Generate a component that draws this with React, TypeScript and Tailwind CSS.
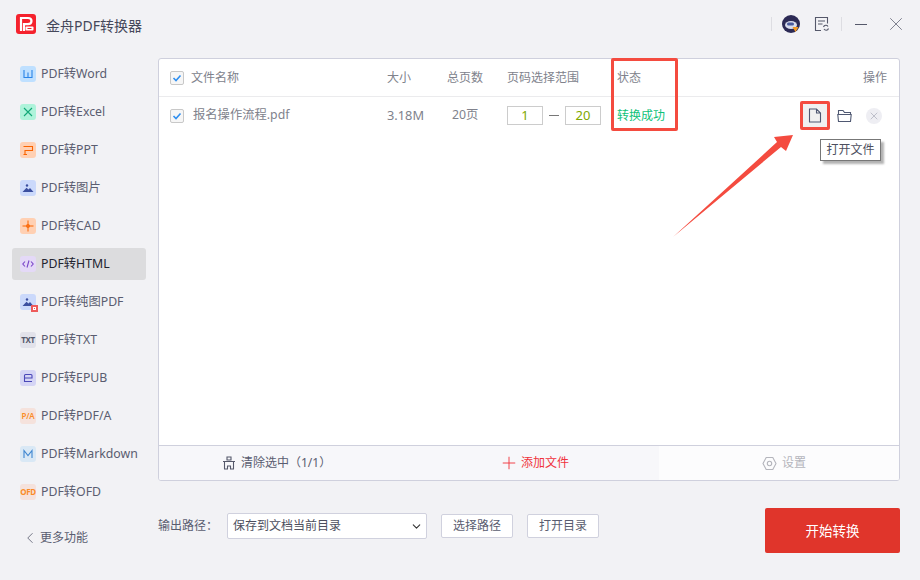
import { ChevronDown, ChevronLeft, Plus, X } from 'lucide-react';
import type { ReactNode } from 'react';

const font = "font-['Noto_Sans','Noto_Sans_CJK_SC',sans-serif]";

function Stroke({ color, d, w = 1.1 }: { color: string; d: string; w?: number }) {
  return (
    <svg width="16" height="16" viewBox="0 0 16 16" fill="none">
      <path d={d} stroke={color} strokeWidth={w} />
    </svg>
  );
}

function Mountain({ color }: { color: string }) {
  return (
    <svg width="16" height="16" viewBox="0 0 16 16">
      <circle cx="7" cy="5.5" r="1.2" fill={color} />
      <path d="M2.5 12 L6.5 7.8 L8.5 9.6 L10 8 L13.5 12 Z" fill={color} />
    </svg>
  );
}

const tools: { label: string; bg: string; icon: ReactNode; active?: boolean }[] = [
  { label: 'PDF转Word', bg: 'bg-[#bfe0ff]', icon: <Stroke color="#2b85e8" d="M4 4 V11.5 H12 V4 M8 6.5 V11.5" /> },
  { label: 'PDF转Excel', bg: 'bg-[#aef3da]', icon: <Stroke color="#12a877" d="M4 4 L12 12 M12 4 L4 12" /> },
  { label: 'PDF转PPT', bg: 'bg-[#ffd0b3]', icon: <Stroke color="#fa6400" d="M3.5 4.5 H12.5 V8.5 H5 V12.5 M3.5 12.5 H7" /> },
  { label: 'PDF转图片', bg: 'bg-[#cbd9fb]', icon: <Mountain color="#3b4fa0" /> },
  { label: 'PDF转CAD', bg: 'bg-[#ffd0b3]', icon: <Stroke color="#fa6400" d="M8 2.5 V13.5 M2.5 8 H13.5 M6.8 6.8 H9.2 V9.2 H6.8 Z" w={1} /> },
  { label: 'PDF转HTML', bg: 'bg-[#e4d9f7]', active: true, icon: <Stroke color="#7a45c9" d="M5 5.5 L2.8 8 L5 10.5 M11 5.5 L13.2 8 L11 10.5 M9 4.5 L7 11.5" /> },
  {
    label: 'PDF转纯图PDF',
    bg: 'bg-[#cbd9fb]',
    icon: (
      <>
        <Mountain color="#3b4fa0" />
        <span className="absolute -right-[2px] -bottom-[2px] flex h-[7px] w-[7px] items-center justify-center bg-[#ee5b5b]">
          <span className="h-[3px] w-[3px] border border-white" />
        </span>
      </>
    ),
  },
  { label: 'PDF转TXT', bg: 'bg-[#e2e2ea]', icon: <span className="text-[8px] leading-none font-bold tracking-[-0.3px] text-[#55586a]">TXT</span> },
  { label: 'PDF转EPUB', bg: 'bg-[#d5d5f5]', icon: <Stroke color="#4a48b8" d="M4.5 8 H12 V5.5 Q12 4.5 11 4.5 H5.5 Q4.5 4.5 4.5 5.5 V11.5 H12" /> },
  { label: 'PDF转PDF/A', bg: 'bg-[#f5e2dc]', icon: <span className="text-[8px] leading-none font-semibold tracking-[-0.2px] text-[#fa8c28]">P/A</span> },
  { label: 'PDF转Markdown', bg: 'bg-[#d9e8f5]', icon: <Stroke color="#3f86d0" d="M4 12 V4.5 L8 9.5 L12 4.5 V12" /> },
  { label: 'PDF转OFD', bg: 'bg-[#f5e2dc]', icon: <span className="text-[8px] leading-none font-bold tracking-[-0.4px] text-[#fa8c28]">OFD</span> },
];

function Check() {
  return (
    <span className="flex h-[14px] w-[14px] shrink-0 items-center justify-center rounded-[2px] border border-[#c8c8c8] bg-[#f6f6f6]">
      <svg width="10" height="10" viewBox="0 0 10 10" fill="none">
        <path d="M1.5 5 L4 7.5 L8.5 2.5" stroke="#2f8ff0" strokeWidth="1.6" />
      </svg>
    </span>
  );
}

function PageBox({ value }: { value: string }) {
  return (
    <span className="flex h-[19px] w-[36px] items-center justify-center border border-[#cccccc] text-[13px] text-[#7fa800]">
      {value}
    </span>
  );
}

export default function App() {
  return (
    <div className={`${font} relative flex h-[580px] w-[920px] flex-col overflow-hidden bg-[#f2f2f5] text-[#5a5d70]`}>
      {/* title bar */}
      <header className="flex h-[58px] shrink-0 items-start">
        <div className="mt-[12px] ml-[16px] flex items-center">
          <svg width="20" height="20" viewBox="0 0 20 20">
            <rect width="20" height="20" rx="3" fill="#f5222d" />
            <path d="M5 17 V4 H12 Q15.5 4 15.5 7 Q15.5 10.2 12 10.2 H8 V17" fill="none" stroke="#fff" strokeWidth="2.2" />
            <rect x="9.5" y="12.5" width="8" height="4" rx="1" fill="#fff" />
            <rect x="11.5" y="14" width="4" height="1" fill="#f5222d" />
          </svg>
          <span className="mt-[3px] ml-[10px] text-[14px] text-[#45485a]">金舟PDF转换器</span>
        </div>
        <div className="mt-[13px] ml-auto flex items-center">
          <span className="h-[14px] w-px bg-[#dddde2]" />
          <svg className="ml-[10px]" width="18" height="18" viewBox="0 0 18 18">
            <circle cx="9" cy="9" r="9" fill="#2c2a55" />
            <ellipse cx="9" cy="10" rx="6" ry="4" fill="#d8dcec" />
            <rect x="5" y="7.5" width="7" height="3" rx="1.5" fill="#4a5a9c" />
            <path d="M10.5 12 H16.5 L13.5 17 Z" fill="#f59a23" />
          </svg>
          <svg className="ml-[14px]" width="16" height="16" viewBox="0 0 16 16" fill="none" stroke="#55586a" strokeWidth="1.1">
            <path d="M7 14.5 H1.5 V1.5 H13.5 V7.5 M4 5 H11 M4 8 H8.5" />
            <path d="M9.5 11 A2.5 2.5 0 0 1 14 10.5 M14.5 12.5 A2.5 2.5 0 0 1 10 13" />
          </svg>
          <span className="ml-[11px] h-[14px] w-px bg-[#dddde2]" />
          <span className="ml-[13px] h-px w-[12px] bg-[#55586a]" />
          <X className="mr-[13px] ml-[18px] h-[22px] w-[22px] text-[#55586a]" strokeWidth={0.8} />
        </div>
      </header>

      <div className="flex h-[423px] shrink-0">
        {/* tool list */}
        <aside className="flex w-[158px] shrink-0 flex-col">
          <nav className="ml-[12px] flex w-[134px] flex-col gap-[6px]">
            {tools.map((tool) => (
              <div
                key={tool.label}
                className={`flex h-[32px] items-center rounded-[3px] pl-[8px] text-[12.3px] ${
                  tool.active ? 'bg-[#dcdcde] text-[#22232e]' : ''
                }`}
              >
                <span className={`relative mr-[5px] flex h-[16px] w-[16px] shrink-0 items-center justify-center rounded-[3px] ${tool.bg}`}>
                  {tool.icon}
                </span>
                {tool.label}
              </div>
            ))}
          </nav>
        </aside>

        {/* file table */}
        <main className="flex w-[742px] flex-col overflow-hidden rounded-[3px] border border-[#cfd0dd] bg-white">
          <div className="flex h-[38px] shrink-0 items-center border-b border-[#ebebed] pl-[11px] text-[12px] text-[#80828c]">
            <Check />
            <span className="ml-[7px] w-[196px]">文件名称</span>
            <span className="w-[60px]">大小</span>
            <span className="w-[60px]">总页数</span>
            <span className="w-[110px]">页码选择范围</span>
            <span>状态</span>
            <span className="mr-[12px] ml-auto">操作</span>
          </div>
          <div className="flex h-[37px] shrink-0 items-center pl-[11px] text-[12.5px] text-[#80828c]">
            <Check />
            <span className="ml-[9px] w-[194px] text-[12.3px]">报名操作流程.pdf</span>
            <span className="w-[65px] text-[12.8px]">3.18M</span>
            <span className="w-[55px] text-[12.3px]">20页</span>
            <span className="flex w-[110px] items-center">
              <PageBox value="1" />
              <span className="mx-[6px] h-px w-[10px] bg-[#777]" />
              <PageBox value="20" />
            </span>
            <span className="w-[48px] text-[12px] text-[#0fc27a]">转换成功</span>
            <span className="ml-[137px] flex h-[26px] w-[26px] items-center justify-center bg-[#f0f0f0]">
              <svg width="14" height="15" viewBox="0 0 14 15" fill="none" stroke="#4f5872" strokeWidth="1.1">
                <path d="M1.5 1 H8.5 L12.5 5 V14 H1.5 Z M8.5 1 V5 H12.5" />
              </svg>
            </span>
            <svg className="ml-[9px]" width="15" height="14" viewBox="0 0 15 14" fill="none" stroke="#4f5872" strokeWidth="1.1">
              <path d="M1.5 5 V1.5 H6 L7.5 3.5 H13.5 V5 M0.8 5.5 H14.2 L13.5 12.5 H1.5 Z" />
            </svg>
            <span className="ml-[14px] flex h-[16px] w-[16px] items-center justify-center rounded-full bg-[#eeeef3]">
              <X className="h-[12px] w-[12px] text-[#a9abb8]" strokeWidth={1.4} />
            </span>
          </div>
          <div className="flex-1" />
          <div className="flex h-[35px] shrink-0 border-t border-[#cfd0dd] bg-[#f7f7fa] text-[12px]">
            <div className="flex w-[250px] items-center pl-[63px]">
              <svg width="14" height="14" viewBox="0 0 14 14" fill="none" stroke="#55586a" strokeWidth="1.1">
                <path d="M5 1 H9 V4 H5 Z M1 5.5 H13 M2.5 5.5 V13 H5.5 V10 H8.5 V13 H11.5 V5.5" />
              </svg>
              <span className="ml-[5px]">清除选中（1/1）</span>
            </div>
            <div className="flex w-[250px] items-center justify-center text-[#f0333c]">
              <Plus className="mr-[2px] h-[20px] w-[20px]" strokeWidth={1.1} />
              添加文件
            </div>
            <div className="flex flex-1 items-center bg-[#fcfcfd] pl-[103px] text-[#b4b5bc]">
              <svg width="15" height="15" viewBox="0 0 15 15" fill="none" stroke="#b4b5bc" strokeWidth="1.1">
                <path d="M4.2 1.5 H10.8 L14 7.5 L10.8 13.5 H4.2 L1 7.5 Z" />
                <circle cx="7.5" cy="7.5" r="2.2" />
              </svg>
              <span className="ml-[5px]">设置</span>
            </div>
          </div>
        </main>
      </div>

      {/* bottom area */}
      <footer className="flex flex-1 items-start text-[12px]">
        <div className="mt-[48px] flex w-[158px] shrink-0 items-center pl-[21px]">
          <ChevronLeft className="h-[18px] w-[18px]" strokeWidth={1.1} />
          <span className="ml-[1px]">更多功能</span>
        </div>
        <div className="mt-[32px] flex items-center">
          <span className="w-[69px]">输出路径：</span>
          <div className="flex h-[26px] w-[200px] items-center justify-between rounded-[2px] border border-[#d0d1de] bg-white pr-[3px] pl-[5px] text-[#4d4f5e]">
            保存到文档当前目录
            <ChevronDown className="h-[13px] w-[13px] text-[#333]" strokeWidth={2} />
          </div>
          <button className="ml-[14px] h-[24px] w-[72px] rounded-[2px] border border-[#d0d1de] bg-white">选择路径</button>
          <button className="ml-[14px] h-[24px] w-[72px] rounded-[2px] border border-[#d0d1de] bg-white">打开目录</button>
        </div>
        <button className="mt-[27px] mr-[20px] ml-auto h-[45px] w-[135px] rounded-[2px] bg-[#e0352b] pt-[1px] text-[13.5px] text-white">
          开始转换
        </button>
      </footer>

      {/* annotations over the screenshot */}
      <div className="absolute top-[58px] left-[611px] h-[73px] w-[67px] rounded-[2px] border-[3px] border-[#f44b3f]" />
      <div className="absolute top-[101px] left-[800px] h-[29px] w-[30px] rounded-[2px] border-[3px] border-[#f44b3f]" />
      <svg className="absolute top-[130px] left-[670px]" width="130" height="112" viewBox="0 0 130 112">
        <polygon points="3,107 107,12 104,7 123,5 116,21 111,17" fill="#f44b3f" />
      </svg>
      <div className="absolute top-[139px] left-[820px] flex h-[22px] w-[61px] items-center justify-center border border-[#777] bg-white text-[12px] text-[#4d4f5e] shadow-[3px_3px_2px_rgba(0,0,0,0.3)]">
        打开文件
      </div>
    </div>
  );
}
